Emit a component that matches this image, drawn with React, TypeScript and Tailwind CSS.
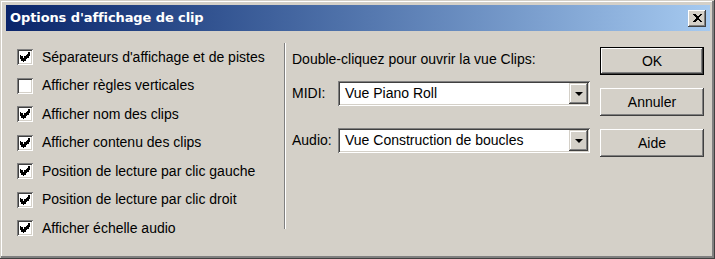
import React from "react";

const options = [
  { label: "Séparateurs d'affichage et de pistes", checked: true },
  { label: "Afficher règles verticales", checked: false },
  { label: "Afficher nom des clips", checked: true },
  { label: "Afficher contenu des clips", checked: true },
  { label: "Position de lecture par clic gauche", checked: true },
  { label: "Position de lecture par clic droit", checked: true },
  { label: "Afficher échelle audio", checked: true },
];

function CheckBox({ checked }: { checked: boolean }) {
  return (
    <span className="w-[16px] h-[16px] bg-white flex items-center justify-center shrink-0 shadow-[inset_1px_1px_#808080,inset_-1px_-1px_#ffffff,inset_2px_2px_#404040,inset_-2px_-2px_#d4d0c8]">
      {checked && (
        <svg width="10" height="10" viewBox="0 0 7 7" shapeRendering="crispEdges">
          <path
            d="M6 0h1v3h-1v1h-1v1h-1v1h-1v1h-1v-1h-1v-1h-1v-3h1v1h1v1h1v-1h1v-1h1z"
            fill="#000"
          />
        </svg>
      )}
    </span>
  );
}

function Combo({ value }: { value: string }) {
  return (
    <div className="w-[252px] h-[25px] bg-white flex items-stretch p-[2px] shadow-[inset_1px_1px_#808080,inset_-1px_-1px_#ffffff,inset_2px_2px_#404040,inset_-2px_-2px_#d4d0c8]">
      <span className="flex-1 pl-[5px] flex items-center text-[14px]">{value}</span>
      <span className="w-[19px] bg-[#d4d0c8] flex items-center justify-center shadow-[inset_-1px_-1px_#404040,inset_1px_1px_#d4d0c8,inset_-2px_-2px_#808080,inset_2px_2px_#ffffff]">
        <svg width="8" height="4" viewBox="0 0 8 4">
          <path d="M0 0h8l-4 4z" fill="#000" />
        </svg>
      </span>
    </div>
  );
}

function Button({ label, isDefault }: { label: string; isDefault?: boolean }) {
  return (
    <div
      className={
        isDefault
          ? "h-[28px] border border-black bg-[#d4d0c8] flex items-center justify-center text-[14px] shadow-[inset_-1px_-1px_#404040,inset_1px_1px_#ffffff,inset_-2px_-2px_#808080,inset_2px_2px_#d4d0c8]"
          : "h-[28px] bg-[#d4d0c8] flex items-center justify-center text-[14px] shadow-[inset_-1px_-1px_#404040,inset_1px_1px_#ffffff,inset_-2px_-2px_#808080,inset_2px_2px_#d4d0c8]"
      }
    >
      {label}
    </div>
  );
}

export default function App() {
  return (
    <div className="w-[715px] h-[259px] bg-[#d4d0c8] flex flex-col pt-[5px] pl-[6px] pr-[5px] pb-[3px] font-['Liberation_Sans',Arial,sans-serif] text-black shadow-[inset_-1px_-1px_#404040,inset_1px_1px_#d4d0c8,inset_-3px_-3px_#808080,inset_2px_2px_#ffffff]">
      {/* title bar */}
      <div className="h-[26px] shrink-0 flex items-center pl-[4px] pr-[4px] bg-gradient-to-r from-[#0a246a] to-[#a6caf0]">
        <span className="flex-1 text-white font-bold text-[13px] font-['DejaVu_Sans',sans-serif] tracking-[-0.1px]">
          Options d'affichage de clip
        </span>
        <span className="w-[18px] h-[17px] bg-[#d4d0c8] flex items-center justify-center shadow-[inset_-1px_-1px_#404040,inset_1px_1px_#ffffff,inset_-2px_-2px_#808080,inset_2px_2px_#d4d0c8]">
          <svg width="9" height="8" viewBox="0 0 9 8" shapeRendering="crispEdges">
            <path d="M0 0h2l2.5 2.5 2.5-2.5h2l-3.5 4 3.5 4h-2l-2.5-2.5-2.5 2.5h-2l3.5-4z" fill="#000" />
          </svg>
        </span>
      </div>

      {/* body */}
      <div className="flex-1 flex pl-[11px]">
        <div className="w-[267px] pt-[12px] flex flex-col text-[14px]">
          {options.map((o) => (
            <div key={o.label} className="h-[28.5px] flex items-center gap-[9px]">
              <CheckBox checked={o.checked} />
              <span className="whitespace-nowrap">{o.label}</span>
            </div>
          ))}
        </div>

        <div className="mt-[12px] h-[186px] w-[2px] border-l border-[#808080] border-r border-r-white" />

        <div className="ml-[6px] w-[298px] pt-[20px] flex flex-col text-[14px]">
          <div className="h-[17px] leading-[17px] whitespace-nowrap">Double-cliquez pour ouvrir la vue Clips:</div>
          <div className="mt-[13px] flex items-center">
            <span className="w-[46px]">MIDI:</span>
            <Combo value="Vue Piano Roll" />
          </div>
          <div className="mt-[22px] flex items-center">
            <span className="w-[46px]">Audio:</span>
            <Combo value="Vue Construction de boucles" />
          </div>
        </div>

        <div className="ml-[10px] w-[104px] pt-[16px] flex flex-col gap-[13px]">
          <Button label="OK" isDefault />
          <Button label="Annuler" />
          <Button label="Aide" />
        </div>
      </div>
    </div>
  );
}
